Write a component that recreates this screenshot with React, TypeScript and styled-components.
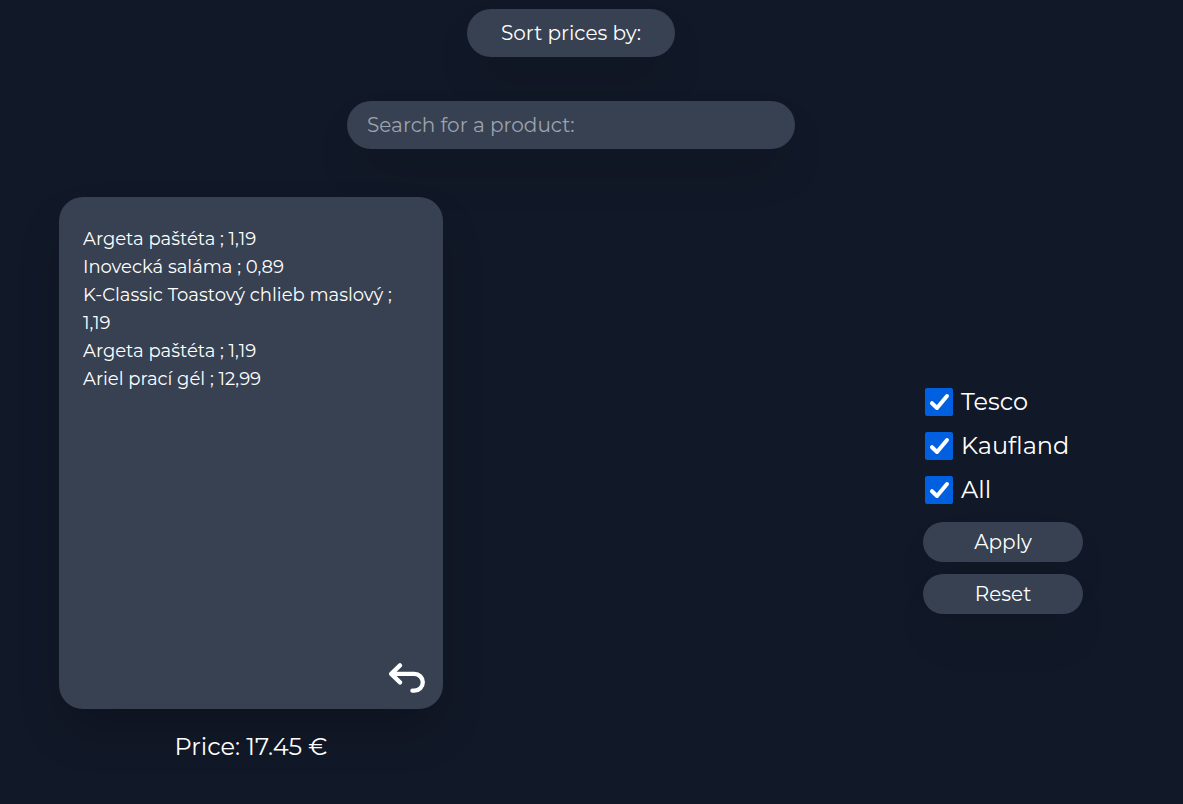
import React, { useState } from 'react';
import styled, { createGlobalStyle } from 'styled-components';

const GlobalStyle = createGlobalStyle`
  * { box-sizing: border-box; }
  body {
    margin: 0;
    background: #111827;
    color: #fff;
    font-family: Montserrat, Inter, sans-serif;
    overflow: hidden;
  }
`;

const pillShadow = '0 25px 50px -12px rgba(0, 0, 0, 0.15)';
const fieldShadow = '0 25px 50px -12px rgba(0, 0, 0, 0.2)';
const cardShadow = '0 25px 50px -12px rgba(0, 0, 0, 0.25)';

const Page = styled.main`
  display: flex;
  flex-direction: column;
  align-items: center;
  width: 1024px;
  height: 804px;
  margin-left: 59px;
  padding-top: 9px;
`;

const SortButton = styled.button`
  width: 208px;
  height: 48px;
  padding: 0;
  border: 0;
  border-radius: 24px;
  background: #374151;
  color: #fff;
  box-shadow: ${fieldShadow};
  font: 400 20px/28px Montserrat, Inter, sans-serif;
`;

const SearchInput = styled.input`
  width: 448px;
  height: 48px;
  margin-top: 44px;
  padding: 0 20px;
  border: 0;
  border-radius: 24px;
  outline: 0;
  background: #374151;
  color: #fff;
  box-shadow: ${fieldShadow};
  font: 400 20px/28px Montserrat, Inter, sans-serif;
  &::placeholder { color: #9ca3af; opacity: 1; }
`;

const Content = styled.div`
  display: flex;
  justify-content: space-between;
  width: 100%;
  margin-top: 48px;
`;

const ListColumn = styled.section`
  display: flex;
  flex-direction: column;
  align-items: center;
  width: 384px;
`;

const Card = styled.div`
  display: flex;
  flex-direction: column;
  justify-content: space-between;
  width: 384px;
  height: 512px;
  padding: 28px 18px 16px 24px;
  border-radius: 24px;
  background: #374151;
  box-shadow: ${cardShadow};
`;

const ProductList = styled.ul`
  width: 336px;
  margin: 0;
  padding: 0;
  list-style: none;
`;

const Product = styled.li`
  font-size: 18px;
  line-height: 28px;
`;

const UndoButton = styled.button`
  display: flex;
  align-self: flex-end;
  padding: 0;
  border: 0;
  background: none;
`;

const Total = styled.p`
  margin: 20px 0 0;
  font-size: 24px;
  line-height: 36px;
`;

const Filters = styled.aside`
  display: flex;
  flex-direction: column;
  width: 160px;
  margin-top: 191px;
`;

const Option = styled.label`
  display: flex;
  align-items: center;
  gap: 8px;
  height: 28px;
  margin: 0 0 16px 2px;
  font-size: 24px;
  line-height: 28px;
`;

const Checkbox = styled.input`
  position: absolute;
  width: 28px;
  height: 28px;
  margin: 0;
  opacity: 0;
`;

const Box = styled.span<{ $checked: boolean }>`
  display: flex;
  width: 28px;
  height: 28px;
  border-radius: 2px;
  background: ${(p) => (p.$checked ? '#0060df' : '#fff')};
`;

const Action = styled.button`
  width: 160px;
  height: 40px;
  margin-top: 12px;
  padding: 0;
  border: 0;
  border-radius: 20px;
  background: #374151;
  color: #fff;
  box-shadow: ${pillShadow};
  font: 400 20px/28px Montserrat, Inter, sans-serif;
  &:first-of-type { margin-top: 2px; }
`;

const products = [
  { name: 'Argeta paštéta', price: '1,19' },
  { name: 'Inovecká saláma', price: '0,89' },
  { name: 'K-Classic Toastový chlieb maslový', price: '1,19' },
  { name: 'Argeta paštéta', price: '1,19' },
  { name: 'Ariel prací gél', price: '12,99' },
];

const shops = ['Tesco', 'Kaufland', 'All'];

function ShopOption({ name }: { name: string }) {
  const [checked, setChecked] = useState(true);
  return (
    <Option>
      <Checkbox type="checkbox" checked={checked} onChange={() => setChecked(!checked)} />
      <Box $checked={checked}>
        <svg width="28" height="28" viewBox="0 0 28 28" fill="none" stroke="#fff" strokeWidth="4" strokeLinecap="round" strokeLinejoin="round">
          <path d="M7 15.2l5 4.8L22 8" />
        </svg>
      </Box>
      {name}
    </Option>
  );
}

export default function App() {
  return (
    <>
      <GlobalStyle />
      <Page>
        <SortButton>Sort prices by:</SortButton>
        <SearchInput placeholder="Search for a product:" />
        <Content>
          <ListColumn>
            <Card>
              <ProductList>
                {products.map((p, i) => (
                  <Product key={i}>{`${p.name} ; ${p.price}`}</Product>
                ))}
              </ProductList>
              <UndoButton aria-label="Undo">
                <svg width="36" height="32" viewBox="0 0 36 32" fill="none" stroke="#fff" strokeWidth="4.3" strokeLinecap="round" strokeLinejoin="round">
                  <path d="M11 4.4L2.2 12.9L11 21.4M2.2 12.9H25.4A8.4 8.4 0 0 1 25.4 29.7H23.4" />
                </svg>
              </UndoButton>
            </Card>
            <Total>Price: 17.45 €</Total>
          </ListColumn>
          <Filters>
            {shops.map((name) => <ShopOption key={name} name={name} />)}
            <Action>Apply</Action>
            <Action>Reset</Action>
          </Filters>
        </Content>
      </Page>
    </>
  );
}
